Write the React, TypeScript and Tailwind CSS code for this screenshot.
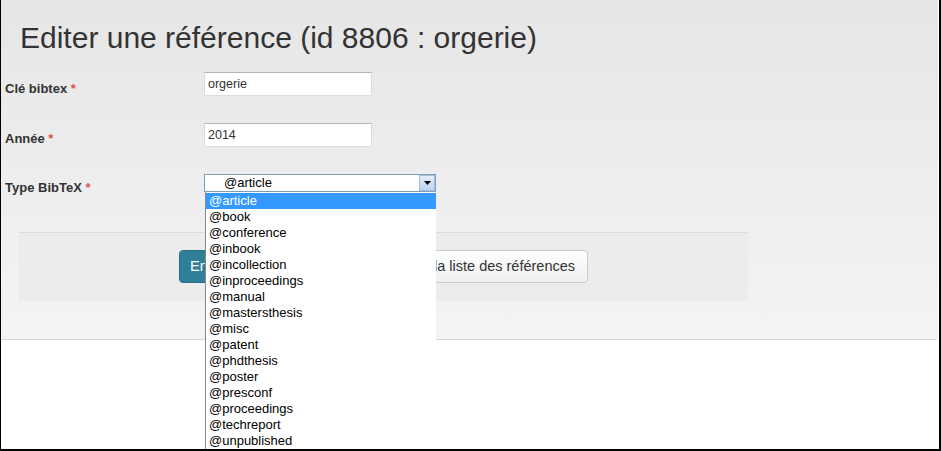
const types = [
  '@article',
  '@book',
  '@conference',
  '@inbook',
  '@incollection',
  '@inproceedings',
  '@manual',
  '@mastersthesis',
  '@misc',
  '@patent',
  '@phdthesis',
  '@poster',
  '@presconf',
  '@proceedings',
  '@techreport',
  '@unpublished',
];

function Label({ text, className }: { text: string; className?: string }) {
  return (
    <label className={`w-[199px] shrink-0 text-[13px] leading-5 font-bold text-[#333] ${className ?? ''}`}>
      {text} <span className="text-[#e05252]">*</span>
    </label>
  );
}

export default function App() {
  return (
    <div className="w-[941px] h-[451px] relative overflow-hidden bg-white border-l border-r-2 border-b-2 border-black font-['Liberation_Sans',Arial,sans-serif]">
      <div className="h-[340px] bg-gradient-to-b from-[#e6e6e6] to-[#f4f4f4] border-b border-[#d8d8d8] rounded-br-[3px] mr-[1px]">
        <h1 className="pl-[19px] pt-[20px] text-[30px] leading-9 text-[#333]">
          Editer une référence (id 8806 : orgerie)
        </h1>

        {/* champs */}
        <div className="mt-[16px] pl-[4px] flex flex-col gap-[27px]">
          <div className="flex items-start h-[24px]">
            <Label text="Clé bibtex" className="pt-[7px]" />
            <div className="w-[168px] h-[24px] bg-white border border-[#dcdcdc] border-t-[#b4b4b4] px-[3px] text-[12.5px] leading-[22px] text-[#333]">
              orgerie
            </div>
          </div>
          <div className="flex items-start h-[24px]">
            <Label text="Année" className="pt-[6px]" />
            <div className="w-[168px] h-[24px] bg-white border border-[#dcdcdc] border-t-[#b4b4b4] px-[3px] text-[12.5px] leading-[22px] text-[#333]">
              2014
            </div>
          </div>
          <div className="flex items-start h-[18px]">
            <Label text="Type BibTeX" className="pt-[4px]" />
            <div className="relative">
              <div className="w-[232px] h-[18px] bg-white border border-[#7f9db9] flex items-center">
                <span className="flex-1 pl-[19px] text-[13px] leading-4 text-black">@article</span>
                <span className="w-[16px] h-[16px] border border-[#a7bddb] bg-gradient-to-b from-[#e3edf9] to-[#bcd3ef] flex items-center justify-center">
                  <svg width="7" height="4" viewBox="0 0 7 4">
                    <path d="M0 0h7L3.5 4z" fill="#000" />
                  </svg>
                </span>
              </div>
              <ul className="absolute left-[1px] top-full w-[231px] bg-white border-l border-[#8a8a8a] pt-[1px] z-10">
                {types.map((t, i) => (
                  <li
                    key={t}
                    className={`h-4 pl-[3px] text-[13px] leading-4 ${i === 0 ? 'bg-[#3399ff] text-white' : 'text-black'}`}
                  >
                    {t}
                  </li>
                ))}
              </ul>
            </div>
          </div>
        </div>

        {/* actions */}
        <div className="mt-[40px] ml-[18px] w-[729px] h-[69px] bg-[#ececec] border-t border-[#dcdcdc] pt-[17px] pl-[160px] flex items-start gap-1">
          <button className="h-[33px] px-[10px] rounded border border-[#26718a] bg-[#2f7f98] text-white text-[14.5px]">
            Enregistrer
          </button>
          <button className="h-[33px] px-3 rounded border border-[#cccccc] bg-gradient-to-b from-white to-[#efefef] text-[#333] text-[14.5px]">
            Annuler et retourner à la liste des références
          </button>
        </div>
      </div>
    </div>
  );
}
